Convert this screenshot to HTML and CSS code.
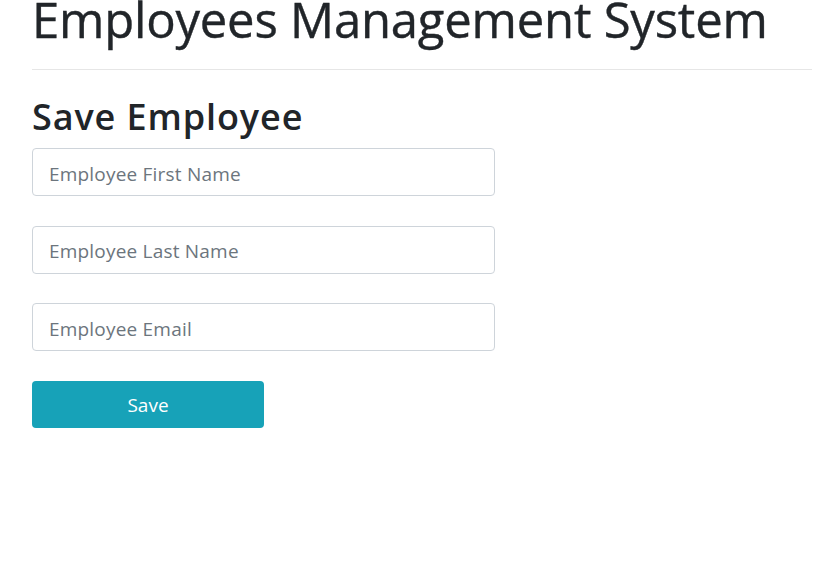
FILE: index.html
```html
<!DOCTYPE html>
<html>
<head>
<meta charset="utf-8">
<link rel="stylesheet" href="styles.css">
</head>
<body>
<div class="page">
  <h1 class="title">Employees Management System</h1>
  <hr class="rule">
  <h2 class="subtitle">Save Employee</h2>
  <form class="form">
    <input class="field" type="text" placeholder="Employee First Name">
    <input class="field" type="text" placeholder="Employee Last Name">
    <input class="field" type="text" placeholder="Employee Email">
    <button class="btn" type="button">Save</button>
  </form>
</div>
</body>
</html>
```
FILE: styles.css
```css
html, body { margin: 0; padding: 0; background: #fff; }
body { font-family: "Open Sans", "Noto Sans", sans-serif; color: #212529; }
.page { padding: 0 10px 0 32px; }
.title { margin: 0; font-size: 49px; font-weight: 400; line-height: 38px; letter-spacing: -0.2px; padding-top: 0; white-space: nowrap; color: #212529; -webkit-text-stroke: 0.4px #212529; }
.rule { margin: 31px 0 0; border: 0; border-top: 1px solid #e6e6e6; }
.subtitle { margin: 24px 0 0; font-size: 36px; font-weight: 600; line-height: 46px; letter-spacing: 0.9px; }
.form { display: flex; flex-direction: column; align-items: flex-start; gap: 29.7px; margin-top: 8px; }
.field { box-sizing: border-box; width: 463px; height: 48px; padding: 3px 16px 0; font-family: inherit; font-size: 19px; letter-spacing: 0.2px; color: #495057; border: 1px solid #ced4da; border-radius: 4px; outline: none; }
.field::placeholder { color: #6c757d; }
.btn { box-sizing: border-box; width: 232px; height: 47px; padding-top: 2px; background: #17a2b8; color: #fff; border: 0; border-radius: 4px; font-family: inherit; font-size: 19px; }
```
